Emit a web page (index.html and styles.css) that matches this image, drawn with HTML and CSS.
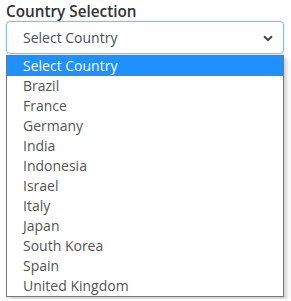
FILE: index.html
```html
<!DOCTYPE html>
<html lang="en">
<head>
  <meta charset="UTF-8" />
  <meta name="viewport" content="width=device-width, initial-scale=1.0"/>
  <title>Country Selection</title>
  <link rel="stylesheet" href="styles.css">
</head>
<body>
  <div class="field">
    <div class="label">Country Selection</div>
    <div class="select">
      <span class="value">Select Country</span>
      <svg class="chevron" width="10" height="7" viewBox="0 0 10 7">
        <path d="M1 1.2 L5 5.2 L9 1.2" fill="none" stroke="#444" stroke-width="2"/>
      </svg>
    </div>
    <div class="options">
      <div class="option selected">Select Country</div>
      <div class="option">Brazil</div>
      <div class="option">France</div>
      <div class="option">Germany</div>
      <div class="option">India</div>
      <div class="option">Indonesia</div>
      <div class="option">Israel</div>
      <div class="option">Italy</div>
      <div class="option">Japan</div>
      <div class="option">South Korea</div>
      <div class="option">Spain</div>
      <div class="option">United Kingdom</div>
    </div>
  </div>
</body>
</html>
```

FILE: styles.css
```css
body {
  margin: 0;
  padding: 2px 6px;
  font-family: 'Open Sans', sans-serif;
  background: #fff;
}
.field {
  width: 278px;
}
.label {
  font-size: 15.3px;
  font-weight: 600;
  color: #333;
  line-height: 18px;
  margin-bottom: 1px;
}
.select {
  height: 33px;
  box-sizing: border-box;
  border: 1px solid #80bdff;
  border-radius: 4px;
  box-shadow: 0 0 2px rgba(0, 123, 255, 0.35);
  display: flex;
  align-items: center;
  justify-content: space-between;
  padding: 0 10px 0 16px;
  color: #495057;
  font-size: 14px;
}
.chevron {
  margin-top: 1px;
}
.options {
  margin-top: 1px;
  background: #fff;
  border: 1px solid #767676;
  box-shadow: 3px 3px 4px rgba(0, 0, 0, 0.18);
}
.option {
  height: 20px;
  line-height: 20px;
  padding-left: 16px;
  font-size: 14px;
  color: #555;
}
.option.selected {
  background: #1e90ff;
  color: #fff;
}
```
